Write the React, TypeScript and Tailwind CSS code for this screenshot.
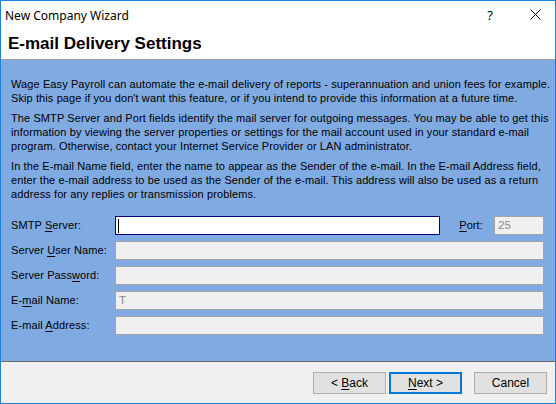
import type { ReactNode } from "react"

const body = { fontFamily: '"Liberation Sans", Arial, sans-serif' }

function Key({ children }: { children: ReactNode }) {
  return <span className="underline underline-offset-2">{children}</span>
}

function FieldRow({ label, value, children }: { label: ReactNode; value?: string; children?: ReactNode }) {
  return (
    <div className="flex items-center h-[19px]">
      <div className="w-[104px] shrink-0 text-[11px] tracking-[0.1px] text-black whitespace-nowrap">{label}</div>
      {children ?? (
        <div className="flex-1 h-[19px] border border-[#a3a3a3] bg-[#f0f0f0] px-[3px] text-[11.5px] leading-[17px] text-[#8a8a8a]">
          {value}
        </div>
      )}
    </div>
  )
}

export default function App() {
  return (
    <div className="w-[556px] h-[404px] border border-[#1883d7] bg-white flex flex-col" style={body}>
      {/* title bar */}
      <div className="h-[29px] flex items-center pl-[4px] pr-[14px]">
        <span className="text-[12px] text-black" style={{ fontFamily: '"Noto Sans", sans-serif' }}>
          New Company Wizard
        </span>
        <span className="ml-auto text-[13px] text-black mr-[37px]" style={{ fontFamily: '"Noto Sans", sans-serif' }}>
          ?
        </span>
        <svg width="11" height="11" viewBox="0 0 11 11" className="mb-[2px]">
          <path d="M0.5 0.5 L10.5 10.5 M10.5 0.5 L0.5 10.5" stroke="#000" strokeWidth="1" />
        </svg>
      </div>

      {/* page header */}
      <div className="h-[30px] border-b border-[#a0a0a0] flex items-center pl-[7px] pb-[2px]">
        <h1 className="text-[17px] font-bold text-black">E-mail Delivery Settings</h1>
      </div>

      {/* blue content area */}
      <div className="h-[302px] overflow-hidden bg-[#80aae2] border-b border-[#696969] pl-[10px] pr-[11px] pt-[17px]">
        <div className="flex flex-col gap-[6px] text-[11px] tracking-[0.1px] leading-[14px] text-black whitespace-nowrap">
          <p>
            Wage Easy Payroll can automate the e-mail delivery of reports - superannuation and union fees for example.
            <br />
            Skip this page if you don't want this feature, or if you intend to provide this information at a future time.
          </p>
          <p>
            The SMTP Server and Port fields identify the mail server for outgoing messages. You may be able to get this
            <br />
            information by viewing the server properties or settings for the mail account used in your standard e-mail
            <br />
            program. Otherwise, contact your Internet Service Provider or LAN administrator.
          </p>
          <p>
            In the E-mail Name field, enter the name to appear as the Sender of the e-mail. In the E-mail Address field,
            <br />
            enter the e-mail address to be used as the Sender of the e-mail. This address will also be used as a return
            <br />
            address for any replies or transmission problems.
          </p>
        </div>

        <div className="mt-[15px] flex flex-col gap-[6px]">
          <FieldRow
            label={
              <>
                SMTP <Key>S</Key>erver:
              </>
            }
          >
            <div className="w-[326px] h-[19px] border border-[#000080] bg-white flex items-center pl-[2px]">
              <div className="w-[1px] h-[14px] bg-black" />
            </div>
            <div className="w-[35px] ml-[19px] text-[11px] tracking-[0.1px]">
              <Key>P</Key>ort:
            </div>
            <div className="w-[50px] h-[19px] border border-[#a3a3a3] bg-[#f0f0f0] px-[3px] text-[11.5px] leading-[17px] text-[#8a8a8a]">
              25
            </div>
          </FieldRow>
          <FieldRow
            label={
              <>
                Server <Key>U</Key>ser Name:
              </>
            }
          />
          <FieldRow
            label={
              <>
                Server Pass<Key>w</Key>ord:
              </>
            }
          />
          <FieldRow
            label={
              <>
                E-<Key>m</Key>ail Name:
              </>
            }
            value="T"
          />
          <FieldRow
            label={
              <>
                E-mail <Key>A</Key>ddress:
              </>
            }
          />
        </div>
      </div>

      {/* footer buttons */}
      <div className="flex-1 bg-[#f0f0f0] flex justify-end items-start pt-[10px] pr-[8px] text-[12px] text-black">
        <button className="w-[73px] h-[22px] border border-[#adadad] bg-[#e1e1e1]">
          &lt; <Key>B</Key>ack
        </button>
        <button className="w-[73px] h-[22px] ml-[3px] border-2 border-[#0078d7] bg-[#e1e1e1]">
          <Key>N</Key>ext &gt;
        </button>
        <button className="w-[73px] h-[22px] ml-[12px] border border-[#adadad] bg-[#e1e1e1]">Cancel</button>
      </div>
    </div>
  )
}
